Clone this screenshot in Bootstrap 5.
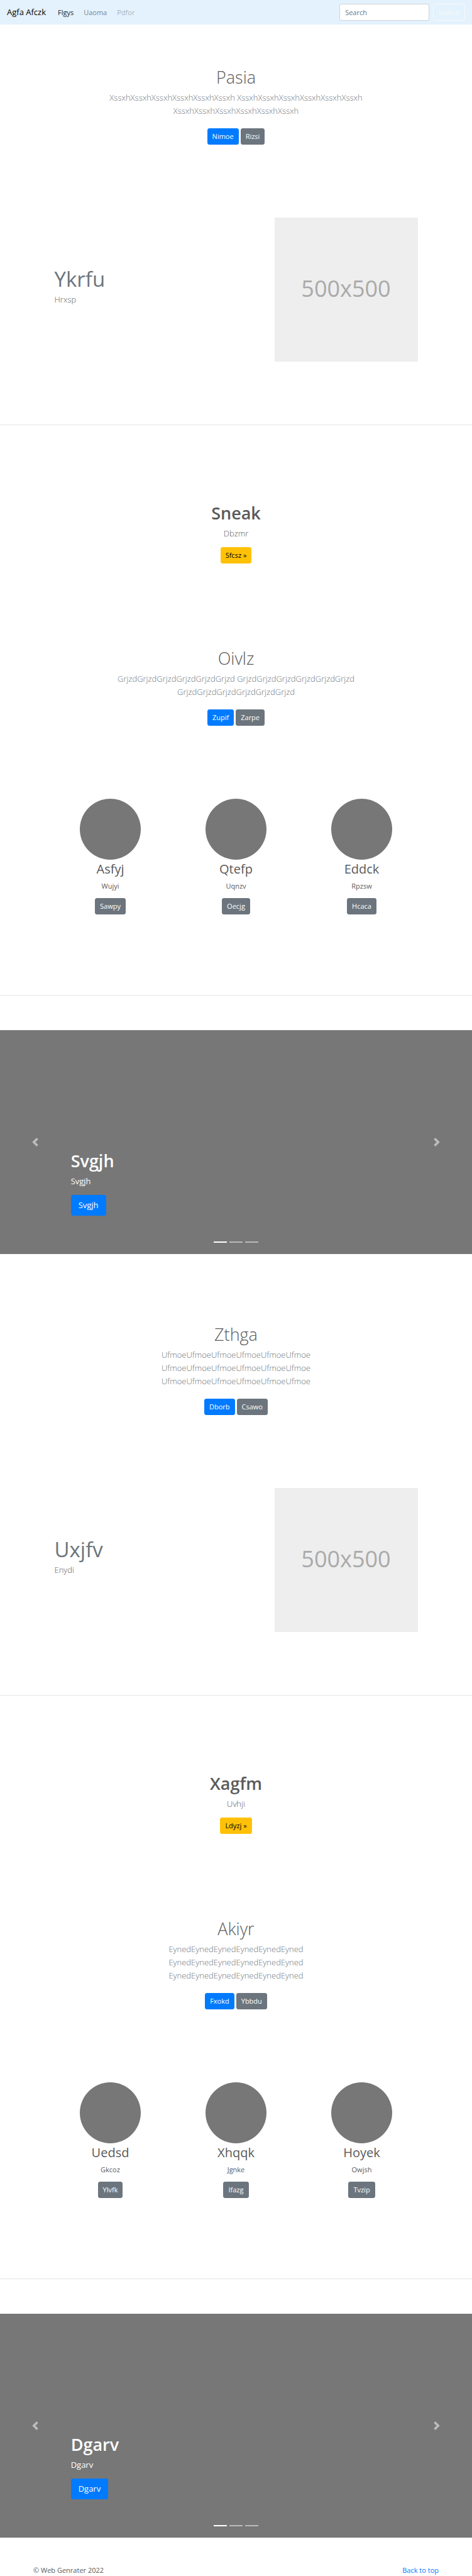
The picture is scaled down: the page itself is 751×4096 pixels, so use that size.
<!DOCTYPE html>
<html lang="en">
<head>
<meta charset="utf-8">
<meta name="viewport" content="width=device-width, initial-scale=1">
<title>Agfa Afczk</title>
<link href="https://cdn.jsdelivr.net/npm/bootstrap@5.3.0/dist/css/bootstrap.min.css" rel="stylesheet">
<style>
  body { font-family: "Open Sans", "Noto Sans", sans-serif; font-size: 11px; line-height: 17px; color: #5a5a5a; }

  .topbar { background: #e3f2fd; padding: 6px 11px; }
  .topbar .navbar-brand { font-size: 13px; line-height: 21px; padding: 3px 0; margin-right: 11px; }
  .topbar .nav-link { font-size: 11px; line-height: 17px; padding: 5px 6px; color: rgba(0,0,0,.5); }
  .topbar .nav-link.active { color: rgba(0,0,0,.9); }
  .topbar .nav-link.disabled { color: rgba(0,0,0,.3); }
  .topbar form { gap: 6px; }
  .topbar .form-control { width: 143px; height: 27px; font-size: 11px; line-height: 17px; padding: 4px 8px; border-color: #ced4da; border-radius: 3px; }
  .topbar .form-control::placeholder { color: #6c757d; }

  .btn { font-size: 11px; line-height: 16px; padding: 4px 7px; border-radius: 3px; }
  .btn-primary { --bs-btn-bg: #007bff; --bs-btn-border-color: #007bff; }
  .btn-lg { font-size: 13px; line-height: 21px; padding: 5px 11px; }
  .btn-pair { gap: 3px; }

  .text-soft { color: #6c757d; }
  .title-lg { font-size: 27px; line-height: 33px; margin-bottom: 6px; }
  .lead-text { font-size: 13px; line-height: 21px; font-weight: 300; }

  .hero { padding: 67px 0; }
  .hero-inner { max-width: 445px; padding: 0 11px; margin: 0 auto; }
  .hero .lead-text { margin-bottom: 17px; }

  .page-width { max-width: 600px; margin: 0 auto; }
  .page-width > .row { --bs-gutter-x: 22px; margin: 0; }
  .feature { padding: 49px 0 100px; }
  .feature h2 { font-size: 33px; line-height: 41px; margin-bottom: 2px; font-weight: 400; color: #6c757d; }
  .feature .lead-text { margin-bottom: 11px; }
  .placeholder-box { height: 229px; padding-bottom: 5px; background: #eee; color: #aaa; font-size: 36px; line-height: 49px; }

  hr { margin: 0; border-color: #000; opacity: .1; }
  .promo { padding: 123px 0 67px; }
  .promo .lead-text { margin-bottom: 11px; }

  .people { padding: 49px 0 128px; }
  .avatar { width: 97px; height: 97px; background: #777; }
  .people h2 { font-size: 20px; line-height: 26px; margin: 2px 0 5px; font-weight: 400; }
  .people p { margin-bottom: 11px; }

  .slides { margin: 55px 0 44px; }
  .slides .carousel-item { height: 356px; background: #777; }
  .slides .carousel-caption { left: 15%; right: 15%; bottom: 61px; padding: 0; }
  .slides .carousel-caption p { font-size: 13px; line-height: 21px; margin-bottom: 11px; }
  .slides .arrow { width: 14px; height: 14px; fill: #fff; }
  .slides .carousel-indicators { margin-bottom: 11px; gap: 4px; }
  .slides .carousel-indicators [data-bs-target] { width: 21px; height: 2px; margin: 0; border-width: 7px 0; }

  footer { padding: 0 53px; line-height: 15px; }
  footer a { color: #007bff; text-decoration: none; }
</style>
</head>
<body>

<header id="top">
  <nav class="navbar navbar-expand topbar">
    <a class="navbar-brand" href="#">Agfa Afczk</a>
    <ul class="navbar-nav me-auto">
      <li class="nav-item"><a class="nav-link active" href="#">Flgys</a></li>
      <li class="nav-item"><a class="nav-link" href="#">Uaoma</a></li>
      <li class="nav-item"><a class="nav-link disabled" href="#">Pdfor</a></li>
    </ul>
    <form class="d-flex" role="search">
      <input class="form-control" type="search" placeholder="Search" aria-label="Search">
      <button class="btn btn-outline-light" type="button">Search</button>
    </form>
  </nav>
</header>

<main>
  <section class="hero text-center">
    <div class="hero-inner">
      <h1 class="title-lg fw-light">Pasia</h1>
      <p class="lead-text text-soft">XssxhXssxhXssxhXssxhXssxhXssxh XssxhXssxhXssxhXssxhXssxhXssxh XssxhXssxhXssxhXssxhXssxhXssxh</p>
      <div class="d-flex justify-content-center btn-pair">
        <button class="btn btn-primary" type="button">Nimoe</button>
        <button class="btn btn-secondary" type="button">Rizsi</button>
      </div>
    </div>
  </section>

  <section class="feature page-width">
    <div class="row align-items-center">
      <div class="col-7">
        <h2>Ykrfu</h2>
        <p class="lead-text">Hrxsp</p>
      </div>
      <div class="col-5">
        <div class="placeholder-box d-flex align-items-center justify-content-center">500x500</div>
      </div>
    </div>
  </section>

  <hr>

  <section class="promo text-center">
    <h2 class="title-lg fw-semibold">Sneak</h2>
    <p class="lead-text">Dbzmr</p>
    <div class="d-flex justify-content-center"><button class="btn btn-warning" type="button">Sfcsz »</button></div>
  </section>

  <section class="hero text-center">
    <div class="hero-inner">
      <h1 class="title-lg fw-light">Oivlz</h1>
      <p class="lead-text text-soft">GrjzdGrjzdGrjzdGrjzdGrjzdGrjzd GrjzdGrjzdGrjzdGrjzdGrjzdGrjzd GrjzdGrjzdGrjzdGrjzdGrjzdGrjzd</p>
      <div class="d-flex justify-content-center btn-pair">
        <button class="btn btn-primary" type="button">Zupif</button>
        <button class="btn btn-secondary" type="button">Zarpe</button>
      </div>
    </div>
  </section>

  <section class="people page-width text-center">
    <div class="row">
      <div class="col-4 d-flex flex-column align-items-center">
        <div class="avatar rounded-circle"></div>
        <h2>Asfyj</h2>
        <p>Wujyi</p>
        <button class="btn btn-secondary" type="button">Sawpy</button>
      </div>
      <div class="col-4 d-flex flex-column align-items-center">
        <div class="avatar rounded-circle"></div>
        <h2>Qtefp</h2>
        <p>Uqnzv</p>
        <button class="btn btn-secondary" type="button">Oecjg</button>
      </div>
      <div class="col-4 d-flex flex-column align-items-center">
        <div class="avatar rounded-circle"></div>
        <h2>Eddck</h2>
        <p>Rpzsw</p>
        <button class="btn btn-secondary" type="button">Hcaca</button>
      </div>
    </div>
  </section>

  <hr>

  <div id="slidesOne" class="carousel slide slides">
    <div class="carousel-indicators">
      <button type="button" data-bs-target="#slidesOne" data-bs-slide-to="0" class="active" aria-current="true" aria-label="Slide 1"></button>
      <button type="button" data-bs-target="#slidesOne" data-bs-slide-to="1" aria-label="Slide 2"></button>
      <button type="button" data-bs-target="#slidesOne" data-bs-slide-to="2" aria-label="Slide 3"></button>
    </div>
    <div class="carousel-inner">
      <div class="carousel-item active">
        <div class="carousel-caption text-start">
          <h2 class="title-lg fw-semibold">Svgjh</h2>
          <p>Svgjh</p>
          <button class="btn btn-primary btn-lg" type="button">Svgjh</button>
        </div>
      </div>
      <div class="carousel-item"></div>
      <div class="carousel-item"></div>
    </div>
    <button class="carousel-control-prev" type="button" data-bs-target="#slidesOne" data-bs-slide="prev" aria-label="Previous">
      <svg class="arrow" viewBox="0 0 8 8" aria-hidden="true"><path d="M5.25 0l-4 4 4 4 1.5-1.5L4.25 4l2.5-2.5L5.25 0z"/></svg>
    </button>
    <button class="carousel-control-next" type="button" data-bs-target="#slidesOne" data-bs-slide="next" aria-label="Next">
      <svg class="arrow" viewBox="0 0 8 8" aria-hidden="true"><path d="M2.75 0l-1.5 1.5L3.75 4l-2.5 2.5L2.75 8l4-4-4-4z"/></svg>
    </button>
  </div>

  <section class="hero text-center">
    <div class="hero-inner">
      <h1 class="title-lg fw-light">Zthga</h1>
      <p class="lead-text text-soft">UfmoeUfmoeUfmoeUfmoeUfmoeUfmoe UfmoeUfmoeUfmoeUfmoeUfmoeUfmoe UfmoeUfmoeUfmoeUfmoeUfmoeUfmoe</p>
      <div class="d-flex justify-content-center btn-pair">
        <button class="btn btn-primary" type="button">Dborb</button>
        <button class="btn btn-secondary" type="button">Csawo</button>
      </div>
    </div>
  </section>

  <section class="feature page-width">
    <div class="row align-items-center">
      <div class="col-7">
        <h2>Uxjfv</h2>
        <p class="lead-text">Enydi</p>
      </div>
      <div class="col-5">
        <div class="placeholder-box d-flex align-items-center justify-content-center">500x500</div>
      </div>
    </div>
  </section>

  <hr>

  <section class="promo text-center">
    <h2 class="title-lg fw-semibold">Xagfm</h2>
    <p class="lead-text">Uvhji</p>
    <div class="d-flex justify-content-center"><button class="btn btn-warning" type="button">Ldyzj »</button></div>
  </section>

  <section class="hero text-center">
    <div class="hero-inner">
      <h1 class="title-lg fw-light">Akiyr</h1>
      <p class="lead-text text-soft">EynedEynedEynedEynedEynedEyned EynedEynedEynedEynedEynedEyned EynedEynedEynedEynedEynedEyned</p>
      <div class="d-flex justify-content-center btn-pair">
        <button class="btn btn-primary" type="button">Fxokd</button>
        <button class="btn btn-secondary" type="button">Ybbdu</button>
      </div>
    </div>
  </section>

  <section class="people page-width text-center">
    <div class="row">
      <div class="col-4 d-flex flex-column align-items-center">
        <div class="avatar rounded-circle"></div>
        <h2>Uedsd</h2>
        <p>Gkcoz</p>
        <button class="btn btn-secondary" type="button">Ylvfk</button>
      </div>
      <div class="col-4 d-flex flex-column align-items-center">
        <div class="avatar rounded-circle"></div>
        <h2>Xhqqk</h2>
        <p>Jgnke</p>
        <button class="btn btn-secondary" type="button">Ifazg</button>
      </div>
      <div class="col-4 d-flex flex-column align-items-center">
        <div class="avatar rounded-circle"></div>
        <h2>Hoyek</h2>
        <p>Owjsh</p>
        <button class="btn btn-secondary" type="button">Tvzip</button>
      </div>
    </div>
  </section>

  <hr>

  <div id="slidesTwo" class="carousel slide slides">
    <div class="carousel-indicators">
      <button type="button" data-bs-target="#slidesTwo" data-bs-slide-to="0" class="active" aria-current="true" aria-label="Slide 1"></button>
      <button type="button" data-bs-target="#slidesTwo" data-bs-slide-to="1" aria-label="Slide 2"></button>
      <button type="button" data-bs-target="#slidesTwo" data-bs-slide-to="2" aria-label="Slide 3"></button>
    </div>
    <div class="carousel-inner">
      <div class="carousel-item active">
        <div class="carousel-caption text-start">
          <h2 class="title-lg fw-semibold">Dgarv</h2>
          <p>Dgarv</p>
          <button class="btn btn-primary btn-lg" type="button">Dgarv</button>
        </div>
      </div>
      <div class="carousel-item"></div>
      <div class="carousel-item"></div>
    </div>
    <button class="carousel-control-prev" type="button" data-bs-target="#slidesTwo" data-bs-slide="prev" aria-label="Previous">
      <svg class="arrow" viewBox="0 0 8 8" aria-hidden="true"><path d="M5.25 0l-4 4 4 4 1.5-1.5L4.25 4l2.5-2.5L5.25 0z"/></svg>
    </button>
    <button class="carousel-control-next" type="button" data-bs-target="#slidesTwo" data-bs-slide="next" aria-label="Next">
      <svg class="arrow" viewBox="0 0 8 8" aria-hidden="true"><path d="M2.75 0l-1.5 1.5L3.75 4l-2.5 2.5L2.75 8l4-4-4-4z"/></svg>
    </button>
  </div>
</main>

<footer class="d-flex justify-content-between">
  <span>© Web Genrater 2022</span>
  <a href="#top">Back to top</a>
</footer>

<script src="https://cdn.jsdelivr.net/npm/bootstrap@5.3.0/dist/js/bootstrap.bundle.min.js"></script>
</body>
</html>
